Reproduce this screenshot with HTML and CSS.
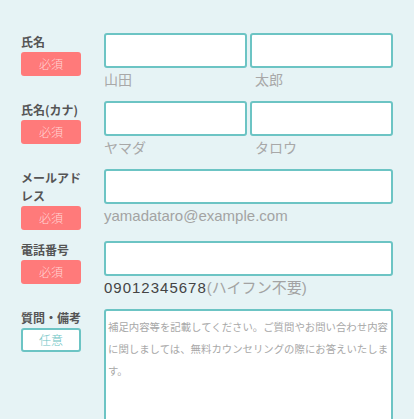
FILE: index.html
```html
<!DOCTYPE html>
<html lang="ja">
<head>
<meta charset="utf-8">
<link rel="stylesheet" href="styles.css">
</head>
<body>
<form class="form">
  <div class="row">
    <div class="label-col">
      <div class="label">氏名</div>
      <span class="badge req">必須</span>
    </div>
    <div class="field pair">
      <div class="cell">
        <input class="input" type="text">
        <div class="hint hint-name">山田</div>
      </div>
      <div class="cell">
        <input class="input" type="text">
        <div class="hint hint-name hint-right">太郎</div>
      </div>
    </div>
  </div>
  <div class="row">
    <div class="label-col">
      <div class="label">氏名(カナ)</div>
      <span class="badge req">必須</span>
    </div>
    <div class="field pair">
      <div class="cell">
        <input class="input" type="text">
        <div class="hint hint-name">ヤマダ</div>
      </div>
      <div class="cell">
        <input class="input" type="text">
        <div class="hint hint-name hint-right">タロウ</div>
      </div>
    </div>
  </div>
  <div class="row">
    <div class="label-col">
      <div class="label">メールアドレス</div>
      <span class="badge req">必須</span>
    </div>
    <div class="field">
      <input class="input" type="text">
      <div class="hint">yamadataro@example.com</div>
    </div>
  </div>
  <div class="row">
    <div class="label-col">
      <div class="label">電話番号</div>
      <span class="badge req">必須</span>
    </div>
    <div class="field">
      <input class="input" type="text">
      <div class="hint"><span class="dark">09012345678</span>(ハイフン不要)</div>
    </div>
  </div>
  <div class="row">
    <div class="label-col">
      <div class="label">質問・備考</div>
      <span class="badge opt">任意</span>
    </div>
    <div class="field">
      <textarea class="textarea" placeholder="補足内容等を記載してください。ご質問やお問い合わせ内容に関しましては、無料カウンセリングの際にお答えいたします。"></textarea>
    </div>
  </div>
</form>
</body>
</html>
```
FILE: styles.css
```css
* { box-sizing: border-box; }
html, body {
  margin: 0;
  background: #e6f3f5;
  overflow: hidden;
}
body {
  font-family: "Noto Sans CJK JP", sans-serif;
  height: 419px;
}
.form {
  padding: 33px 21px 0 21px;
  display: flex;
  flex-direction: column;
  gap: 11px;
}
.row {
  display: grid;
  grid-template-columns: 60px 1fr;
  column-gap: 23px;
  align-items: start;
}
.label-col {
  display: flex;
  flex-direction: column;
  align-items: stretch;
}
.label {
  font-size: 12px;
  line-height: 18px;
  font-weight: bold;
  color: #555;
  margin-bottom: 1px;
}
.badge {
  display: block;
  height: 24px;
  border-radius: 3px;
  font-size: 12px;
  line-height: 24px;
  text-align: center;
  font-weight: 300;
}
.req {
  background: #ff7a7a;
  color: #ffd6d6;
}
.opt {
  background: #ffffff;
  border: 2px solid #6cc4c4;
  line-height: 20px;
  color: #6cc4c4;
}
.pair {
  display: grid;
  grid-template-columns: 1fr 1fr;
  column-gap: 3px;
}
.cell {
  min-width: 0;
}
.input {
  display: block;
  width: 100%;
  height: 35px;
  margin: 0;
  background: #ffffff;
  border: 2px solid #6cc4c4;
  border-radius: 3px;
  outline: none;
}
.hint {
  font-family: "Liberation Sans", "Noto Sans CJK JP", sans-serif;
  font-size: 15px;
  line-height: 20px;
  padding-top: 2px;
  color: #a3a3a3;
  white-space: nowrap;
}
.hint-name {
  font-size: 14px;
  color: #a8a8a8;
}
.hint-right {
  padding-left: 5px;
}
.dark {
  color: #444;
  letter-spacing: 1px;
}
.textarea {
  display: block;
  width: 100%;
  height: 140px;
  margin: 0;
  padding: 5px 2px;
  background: #ffffff;
  border: 2px solid #6cc4c4;
  border-radius: 3px;
  font-family: "Noto Sans CJK JP", sans-serif;
  font-size: 10.4px;
  line-height: 22px;
  resize: none;
  outline: none;
  overflow: hidden;
}
.textarea::placeholder {
  color: #a8a8a8;
  opacity: 1;
}
```
